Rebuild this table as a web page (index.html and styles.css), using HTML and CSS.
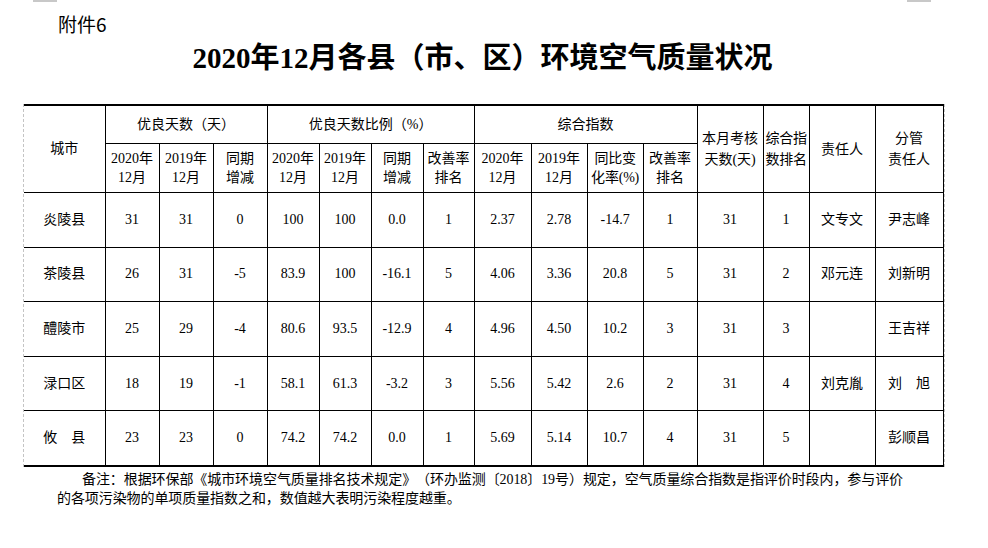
FILE: index.html
```html
<!DOCTYPE html>
<html lang="zh-CN">
<head>
<meta charset="utf-8">
<title>2020年12月各县（市、区）环境空气质量状况</title>
<link rel="stylesheet" href="styles.css">
</head>
<body>
<span class="mark mark-left"></span>
<span class="mark mark-right"></span>
<div class="page">
  <div class="attach">附件6</div>
  <h1 class="title">2020年12月各县（市、区）环境空气质量状况</h1>
  <div class="sheet">
    <table class="aq">
      <colgroup>
        <col style="width:81px"><col style="width:54px"><col style="width:54px"><col style="width:54px">
        <col style="width:52px"><col style="width:52px"><col style="width:52px"><col style="width:51px">
        <col style="width:57px"><col style="width:56px"><col style="width:56px"><col style="width:54px">
        <col style="width:66px"><col style="width:46px"><col style="width:66px"><col style="width:68px">
      </colgroup>
      <thead>
        <tr class="h1">
          <th rowspan="2" class="first">城市</th>
          <th colspan="3">优良天数（天）</th>
          <th colspan="4">优良天数比例（%）</th>
          <th colspan="4">综合指数</th>
          <th rowspan="2" class="tall">本月考核<br>天数(天)</th>
          <th rowspan="2" class="tall tight">综合指<br>数排名</th>
          <th rowspan="2" class="tall">责任人</th>
          <th rowspan="2" class="tall">分管<br>责任人</th>
        </tr>
        <tr class="h2">
          <th>2020年<br>12月</th>
          <th>2019年<br>12月</th>
          <th>同期<br>增减</th>
          <th>2020年<br>12月</th>
          <th>2019年<br>12月</th>
          <th>同期<br>增减</th>
          <th>改善率<br>排名</th>
          <th>2020年<br>12月</th>
          <th>2019年<br>12月</th>
          <th class="tight">同比变<br>化率(%)</th>
          <th>改善率<br>排名</th>
        </tr>
      </thead>
      <tbody>
        <tr>
          <td class="first">炎陵县</td><td>31</td><td>31</td><td>0</td><td>100</td><td>100</td><td>0.0</td><td>1</td>
          <td>2.37</td><td>2.78</td><td>-14.7</td><td>1</td><td>31</td><td>1</td><td>文专文</td><td>尹志峰</td>
        </tr>
        <tr>
          <td class="first">茶陵县</td><td>26</td><td>31</td><td>-5</td><td>83.9</td><td>100</td><td>-16.1</td><td>5</td>
          <td>4.06</td><td>3.36</td><td>20.8</td><td>5</td><td>31</td><td>2</td><td>邓元连</td><td>刘新明</td>
        </tr>
        <tr>
          <td class="first">醴陵市</td><td>25</td><td>29</td><td>-4</td><td>80.6</td><td>93.5</td><td>-12.9</td><td>4</td>
          <td>4.96</td><td>4.50</td><td>10.2</td><td>3</td><td>31</td><td>3</td><td></td><td>王吉祥</td>
        </tr>
        <tr>
          <td class="first">渌口区</td><td>18</td><td>19</td><td>-1</td><td>58.1</td><td>61.3</td><td>-3.2</td><td>3</td>
          <td>5.56</td><td>5.42</td><td>2.6</td><td>2</td><td>31</td><td>4</td><td>刘克胤</td><td>刘　旭</td>
        </tr>
        <tr>
          <td class="first">攸　县</td><td>23</td><td>23</td><td>0</td><td>74.2</td><td>74.2</td><td>0.0</td><td>1</td>
          <td>5.69</td><td>5.14</td><td>10.7</td><td>4</td><td>31</td><td>5</td><td></td><td>彭顺昌</td>
        </tr>
      </tbody>
    </table>
  </div>
  <p class="note">备注：根据环保部《城市环境空气质量排名技术规定》（环办监测〔2018〕19号）规定，空气质量综合指数是指评价时段内，参与评价<br>的各项污染物的单项质量指数之和，数值越大表明污染程度越重。</p>
</div>
</body>
</html>
```

FILE: styles.css
```css
html, body {
  margin: 0;
  padding: 0;
  background: #ffffff;
}

body {
  position: relative;
  width: 988px;
  height: 548px;
  overflow: hidden;
  color: #000000;
  font-family: "Liberation Serif", "Noto Sans CJK SC", serif;
  text-spacing-trim: space-all;
}

.mark {
  position: absolute;
  top: 0;
  height: 2px;
  width: 24px;
  background: #c8c8c8;
}

.mark-left {
  left: 33px;
}

.mark-right {
  left: 907px;
}

.page {
  margin-left: 23px;
  width: 921px;
  padding-top: 13px;
}

.attach {
  margin-left: 35px;
  font-family: "Noto Sans CJK SC", sans-serif;
  font-size: 19px;
  line-height: 22px;
}

.title {
  margin: 5px 0 28px 0;
  font-size: 29px;
  line-height: 36px;
  font-weight: bold;
  text-align: center;
  width: 919px;
  white-space: nowrap;
}

.sheet {
  display: inline-block;
  border-left: 1px dashed #c4c4c4;
  border-right: 1px dashed #c4c4c4;
  vertical-align: top;
}

.aq {
  border-collapse: collapse;
  table-layout: fixed;
  width: 919px;
  font-size: 14px;
  border-top: 2px solid #000;
  border-bottom: 2px solid #000;
}

.aq th,
.aq td {
  border: 1px solid #000;
  padding: 0 1px;
  text-align: center;
  vertical-align: middle;
  font-weight: normal;
}

.aq .first {
  border-left: none;
}

.aq tr > :last-child {
  border-right: 1px solid #000;
}

.aq .h1 th {
  height: 37px;
  line-height: 20px;
}

.aq .h1 th.tall {
  line-height: 21px;
}

.aq .h2 th {
  height: 48px;
  line-height: 19px;
}

.aq .tight {
  padding: 0;
  letter-spacing: -0.2px;
}

.aq tbody td {
  height: 53.6px;
  line-height: 20px;
}

.note {
  margin: 3px 0 0 34px;
  width: 900px;
  font-size: 14px;
  line-height: 19px;
  text-indent: 25px;
  letter-spacing: -0.08px;
}
```
